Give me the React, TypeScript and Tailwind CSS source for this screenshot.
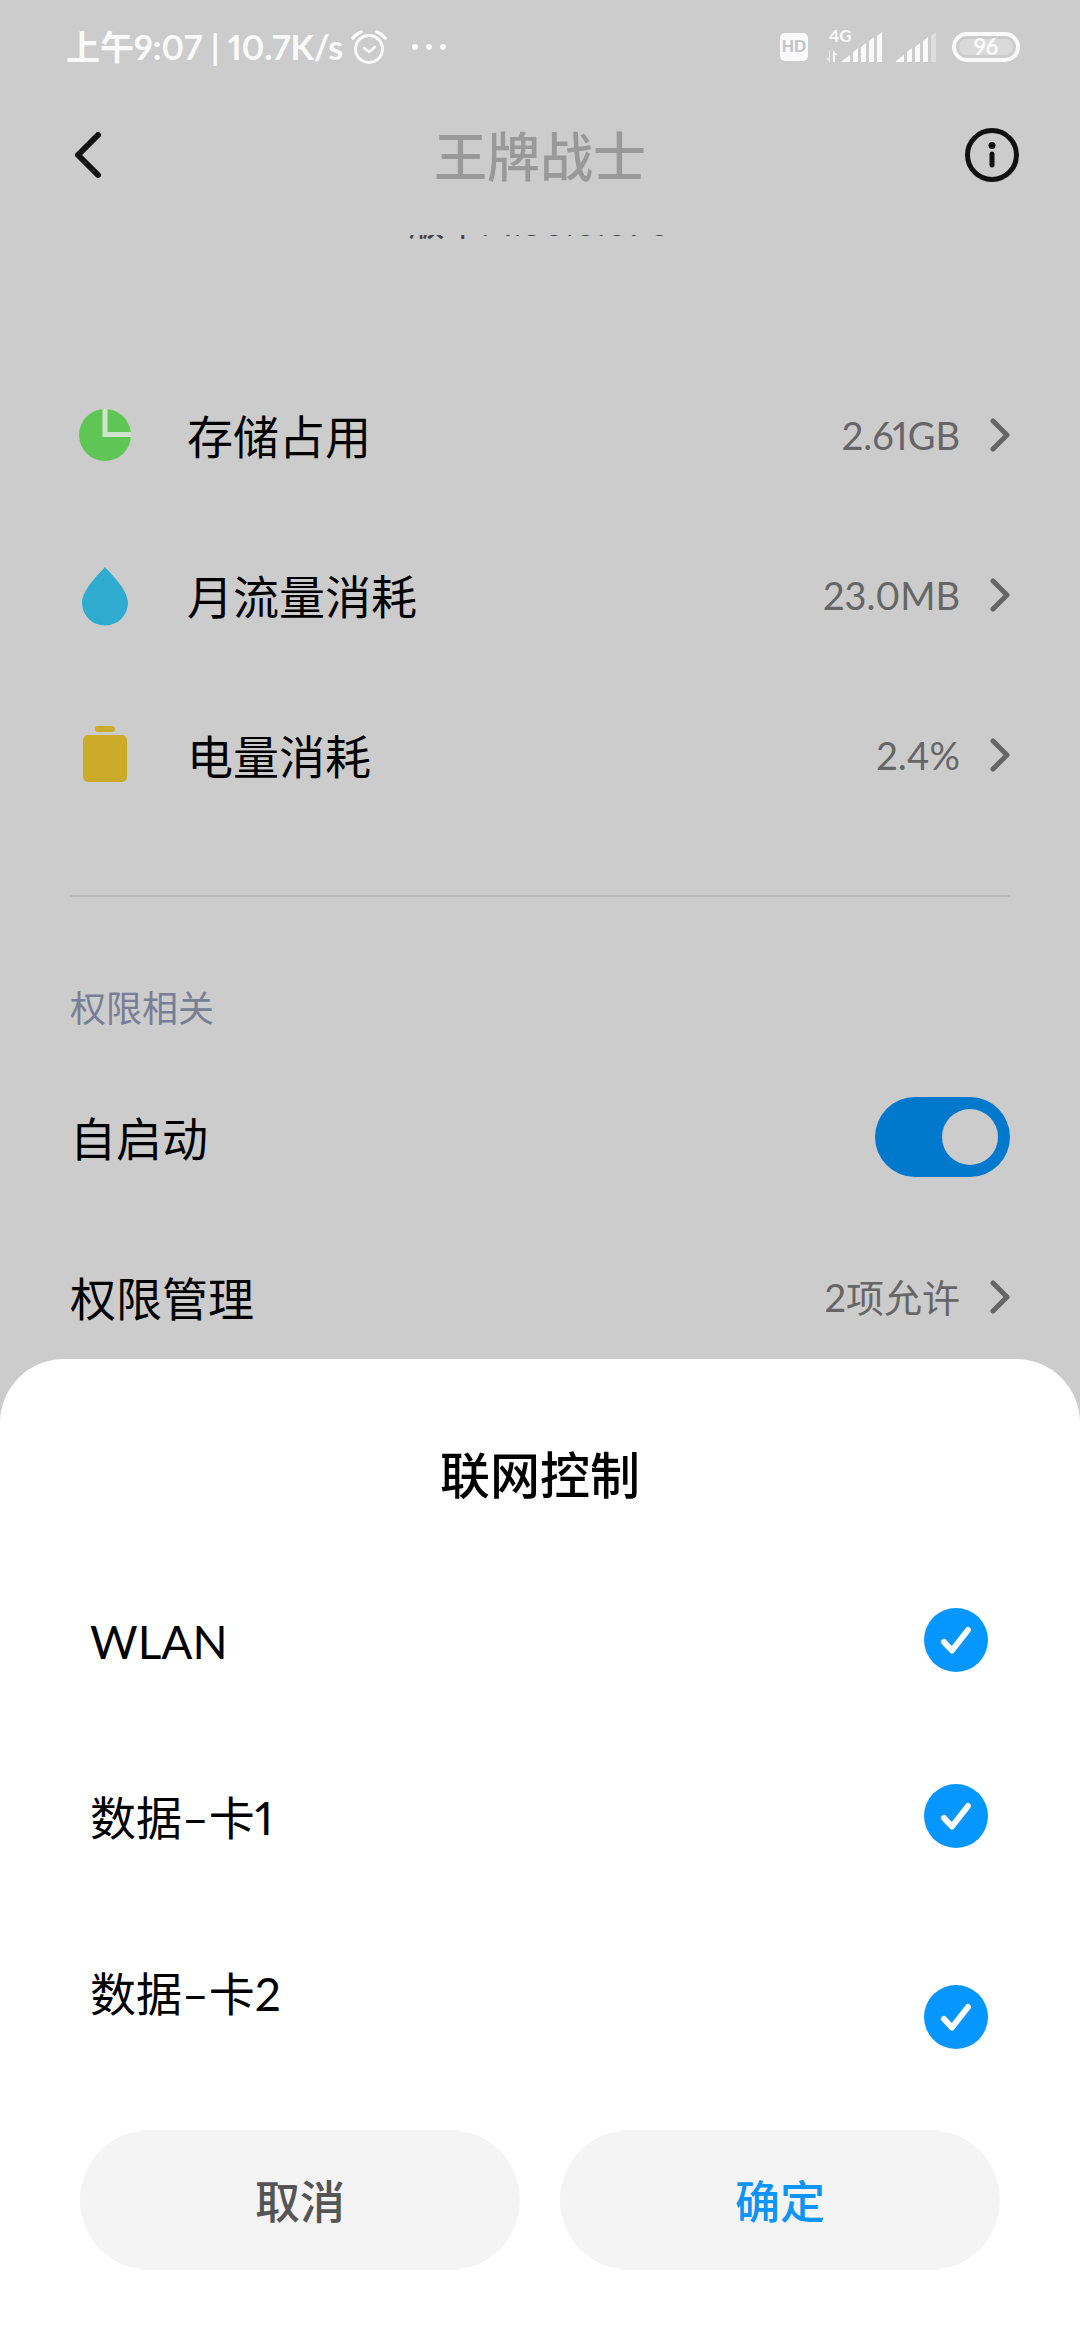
import { useState } from "react";
import type { ReactNode } from "react";

const USAGE = [
  { id: "storage", label: "存储占用", value: "2.61GB", icon: <PieIcon /> },
  { id: "traffic", label: "月流量消耗", value: "23.0MB", icon: <DropIcon /> },
  { id: "power", label: "电量消耗", value: "2.4%", icon: <PowerIcon /> },
];

const NETWORKS = [
  { id: "wlan", label: "WLAN" },
  { id: "sim1", label: "数据–卡1" },
  { id: "sim2", label: "数据–卡2" },
];

function PieIcon() {
  return (
    <svg width="70" height="70" viewBox="0 0 70 70" aria-hidden="true">
      <circle cx="35" cy="35" r="26" fill="#5fc655" />
      <path d="M35 9V34.500H61" fill="none" stroke="#cfe3cd" strokeWidth="5" />
    </svg>
  );
}

function DropIcon() {
  return (
    <svg width="70" height="70" viewBox="0 0 70 70" aria-hidden="true">
      <path d="M35 7C39 12 58 29 58 43a23 22.500 0 0 1-46 0C12 29 31 12 35 7z" fill="#2fabd0" />
    </svg>
  );
}

function PowerIcon() {
  return (
    <svg width="70" height="70" viewBox="0 0 70 70" fill="#cbab29" aria-hidden="true">
      <rect x="25" y="6" width="20" height="6" rx="3" />
      <rect x="13" y="15" width="44" height="47" rx="5" />
    </svg>
  );
}

function ChevronIcon() {
  return (
    <svg width="20" height="34" viewBox="0 0 20 34" fill="none" aria-hidden="true">
      <path d="M3 3l14 14L3 31" stroke="#666" strokeWidth="5" strokeLinecap="round" strokeLinejoin="round" />
    </svg>
  );
}

function StatusBar() {
  return (
    <div className="flex h-[94px] items-center justify-between pr-[60px] pl-[66px] text-[#fafafa]">
      <div className="flex items-center">
        <span className="text-[34px] leading-[40px] font-bold">上午9:07 | 10.7K/s</span>
        <svg className="ml-2" width="36" height="36" viewBox="0 0 36 36" fill="none" stroke="currentColor" strokeLinecap="round" strokeLinejoin="round" aria-hidden="true">
          <circle cx="18" cy="20" r="13.500" strokeWidth="3" />
          <path d="M13 19l5 4 6-5" strokeWidth="2.500" />
          <path d="M2 9q3-4 8-6M34 9q-3-4-8-6" strokeWidth="3.500" />
        </svg>
        <svg className="ml-6" width="36" height="8" viewBox="0 0 36 8" fill="currentColor" aria-hidden="true">
          <circle cx="4" cy="4" r="3" />
          <circle cx="18" cy="4" r="3" />
          <circle cx="32" cy="4" r="3" />
        </svg>
      </div>
      <div className="flex items-center">
        <span className="flex h-7 w-7 items-center justify-center rounded-[5px] bg-[#fafafa] font-['Liberation_Sans'] text-[17px] leading-7 font-bold text-[#c4c4c4]">
          HD
        </span>
        <svg className="ml-[17px]" width="57" height="50" viewBox="0 -8 57 50" fill="currentColor" aria-hidden="true">
          <text x="4" y="12" fontSize="17" fontWeight="700">4G</text>
          <path d="M4 20v8H1l4 5V20z" opacity=".6" />
          <path d="M8 32V20l4 5h-2v7z" />
          <path d="M17 32v-1l8-6v7zM28 32V22l5-4v14zM36 32V17l5-4v19zM44 32V11l5-4v25zM52 32V6l5-4v30z" />
        </svg>
        <svg className="ml-[14px]" width="40" height="34" viewBox="0 0 40 34" fill="currentColor" aria-hidden="true">
          <path d="M0 32v-1l8-6v7zM11 32V22l5-4v14zM19 32V17l5-4v19zM27 32V11l5-4v25z" />
          <path d="M35 32V6l5-4v30z" opacity=".4" />
        </svg>
        <span className="ml-4 flex h-[30px] w-[68px] rounded-full border-4 border-[#fafafa] p-[3px]">
          <span className="flex flex-1 items-center justify-center rounded-full bg-[#dadada] text-[22px] leading-[16px] font-bold">
            96
          </span>
        </span>
      </div>
    </div>
  );
}

function SettingRow({ label, value, icon }: { label: string; value: string; icon?: ReactNode }) {
  return (
    <button type="button" className="flex h-40 w-full items-center text-left">
      {icon && <span className="mr-[47px] shrink-0">{icon}</span>}
      <span className="flex-1 pt-1 text-[46px] leading-[60px] text-black">{label}</span>
      <span className="mr-[30px] text-[38px] leading-[48px] text-[#666]">{value}</span>
      <ChevronIcon />
    </button>
  );
}

function NetworkSheet() {
  const [checked, setChecked] = useState<Record<string, boolean>>({ wlan: true, sim1: true, sim2: true });

  return (
    <div
      role="dialog"
      aria-labelledby="sheet-title"
      className="fixed inset-x-0 bottom-0 rounded-t-[64px] bg-white pt-[84px] pb-[70px]"
    >
      <h2 id="sheet-title" className="mb-[45px] text-center text-[50px] leading-[64px] font-medium text-black">
        联网控制
      </h2>
      <div className="pr-[92px] pl-[90px]">
        {NETWORKS.map((n) => (
          <label key={n.id} className="flex justify-between last:h-[226px]">
            <span className="flex h-44 items-center pt-1 text-[46px] leading-[60px] text-black">{n.label}</span>
            <span className="grid items-center">
              <input
                type="checkbox"
                checked={checked[n.id]}
                onChange={() => setChecked({ ...checked, [n.id]: !checked[n.id] })}
                className="peer col-start-1 row-start-1 size-16 appearance-none rounded-full bg-[#e5e5e5] checked:bg-[#0597ff]"
              />
              <svg className="pointer-events-none col-start-1 row-start-1 hidden peer-checked:block" width="64" height="64" viewBox="0 0 64 64" fill="none" aria-hidden="true">
                <path d="M20 34l8 8.500L44 22" stroke="#fff" strokeWidth="6" strokeLinecap="round" strokeLinejoin="round" />
              </svg>
            </span>
          </label>
        ))}
      </div>
      <div className="flex gap-10 px-20">
        <button type="button" className="h-[140px] flex-1 rounded-full bg-[#f4f4f4] pt-1 text-[45px] leading-[60px] font-medium text-[#555]">
          取消
        </button>
        <button type="button" className="h-[140px] flex-1 rounded-full bg-[#f4f4f4] pt-1 text-[45px] leading-[60px] font-medium text-[#0d94f5]">
          确定
        </button>
      </div>
    </div>
  );
}

export default function App() {
  const [autoStart, setAutoStart] = useState(true);

  return (
    <div className="min-h-screen bg-[#ccc] font-[Lato,'Noto_Sans_CJK_SC',sans-serif] proportional-nums">
      <StatusBar />

      <header className="mb-[19px] flex h-[122px] items-center justify-between pr-[60px] pl-[72px]">
        <button type="button" aria-label="返回" className="w-[57px]">
          <svg width="32" height="50" viewBox="0 0 32 50" fill="none" aria-hidden="true">
            <path d="M26 5L6 25l20 20" stroke="#111" strokeWidth="6" strokeLinecap="round" strokeLinejoin="round" />
          </svg>
        </button>
        <h1 className="pt-1 text-[53px] leading-[64px] font-medium text-[#999]">王牌战士</h1>
        <button type="button" aria-label="应用信息" className="flex w-[69px] justify-end">
          <svg width="56" height="56" viewBox="0 0 56 56" fill="none" aria-hidden="true">
            <circle cx="28" cy="28" r="24.500" stroke="#111" strokeWidth="5" />
            <circle cx="28" cy="18.500" r="3.500" fill="#111" />
            <path d="M28 27v11" stroke="#111" strokeWidth="5" strokeLinecap="round" />
          </svg>
        </button>
      </header>

      {/* Scrolled content, the version line is almost out of view */}
      <main className="px-[70px]">
        <div className="h-[120px]">
          <div className="flex h-[11px] items-end justify-center overflow-hidden">
            <p className="text-[36px] leading-[48px] text-[#444]">版本: 1.60.0.070</p>
          </div>
        </div>

        {USAGE.map((u) => (
          <SettingRow key={u.id} label={u.label} value={u.value} icon={u.icon} />
        ))}

        <hr className="mt-[60px] border-t-2 border-[#b8b8b8]" />

        <h2 className="mt-[87px] mb-[25px] text-[36px] leading-[48px] text-[#787e94]">权限相关</h2>
        <label className="flex h-40 items-center justify-between">
          <span className="pt-1 text-[46px] leading-[60px] text-black">自启动</span>
          <input
            type="checkbox"
            role="switch"
            checked={autoStart}
            onChange={() => setAutoStart(!autoStart)}
            className="flex h-20 w-[135px] appearance-none items-center rounded-full bg-[#aaa] px-3 before:size-14 before:rounded-full before:bg-[#ccc] checked:justify-end checked:bg-[#0079cc]"
          />
        </label>
        <SettingRow label="权限管理" value="2项允许" />
      </main>

      <NetworkSheet />
    </div>
  );
}
